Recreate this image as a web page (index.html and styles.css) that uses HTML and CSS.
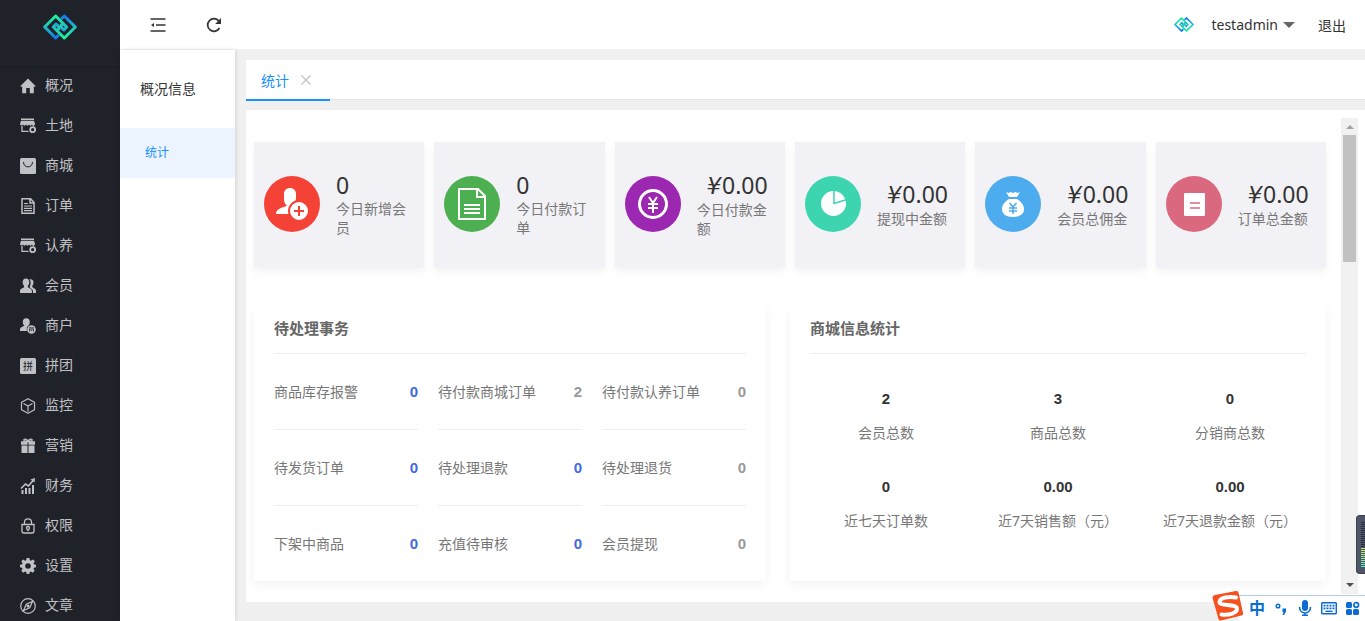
FILE: index.html
```
<!DOCTYPE html>
<html lang="zh-CN">

<head>
    <meta charset="UTF-8">
    <meta name="viewport" content="width=device-width, initial-scale=1.0">
    <title>统计</title>
    <link rel="stylesheet" href="styles.css">
</head>

<body>
    <svg class="sprite" aria-hidden="true">
        <defs>
            <linearGradient id="g3" x1="0" y1="0" x2="0" y2="1">
                <stop offset="0" stop-color="#22f098" />
                <stop offset="0.500" stop-color="#20c0c4" />
                <stop offset="1" stop-color="#1478f0" />
            </linearGradient>
            <linearGradient id="g4" x1="0" y1="0" x2="0" y2="1">
                <stop offset="0" stop-color="#1478f0" />
                <stop offset="0.500" stop-color="#20c0c4" />
                <stop offset="1" stop-color="#22f098" />
            </linearGradient>
            <symbol id="logo" viewBox="0 0 102 76">
                <g fill="none" stroke-width="9" stroke-linejoin="round">
                    <path stroke="url(#g4)" d="M54 14 64 5 97 38 64 71 31 38 39 29 47 36V48" />
                    <path stroke="url(#g3)" d="M48 62 38 71 5 38 38 5 71 38 63 47 55 40V28" />
                </g>
            </symbol>
            <symbol id="home" viewBox="0 0 16 16">
                <path fill="currentColor" d="M8 .5 0 8.600h2.200V15.200h4V10h3.600v5.200h4V8.600H16L8 .5z" />
            </symbol>
            <symbol id="shop" viewBox="0 0 16 16">
                <path fill="currentColor" d="M1 .5h13v1.400H1zM1 2.700h13l1 3.300c0 1.600-2.400 2-3 .6-.6 1.400-2.600 1.400-3 0-.6 1.400-2.500 1.400-3 0-.6 1.400-2.500 1.400-3 0C2.500 8 0 7.600 0 6z" />
                <path fill="none" stroke="currentColor" stroke-width="1.300" d="M2 8v5.400h6.500M13.500 6v2" />
                <circle cx="12.700" cy="11.700" r="2.500" fill="none" stroke="currentColor" stroke-width="1.800" />
            </symbol>
            <symbol id="bag" viewBox="0 0 16 16">
                <rect width="16" height="16" rx="1.500" fill="currentColor" />
                <path fill="none" stroke="#20222a" d="M3.500 4c0 6.500 9 6.500 9 0" />
            </symbol>
            <symbol id="order" viewBox="0 0 16 16">
                <path fill="none" stroke="currentColor" stroke-width="1.500" d="M2 .8h8.500L14 4.300v10.900H2zM10 1v4h4" />
                <path stroke="currentColor" stroke-width="1.200" d="M4 5.500h4M4 8h8M4 10.300h8M4 12.600h8" />
            </symbol>
            <symbol id="users" viewBox="0 0 16 16">
                <path fill="currentColor" d="M6 .5c2.200 0 3.300 1.600 3.300 3.600 0 1.700-.6 2.900-1.400 3.800v1.400c1 1 3.600 1.500 4 3.200V15H0v-2.500c.4-1.700 3-2.200 4-3.200V7.900C3.200 7 2.700 5.800 2.700 4.100 2.700 2.100 3.800.5 6 .5z" />
                <path fill="currentColor" d="M9.500 1.300c2.800-.6 4.200 1.200 4 3.500-.1 1.300-.6 2.200-1.200 3v1.300c1 1 3.400 1.700 3.700 3.400V15h-3c.2-3-.6-4-3.200-5.200V8.200c1.300-2.200 1.200-4.900-.3-6.900z" />
            </symbol>
            <symbol id="merchant" viewBox="0 0 16 16">
                <path fill="currentColor" d="M6.300.2c2.300 0 3.500 1.600 3.500 3.700 0 1.600-.7 3-1.600 3.900-1.400 1.400-1.800 3.200-1.200 5.200H0v-2c.3-1.700 3.200-2.200 4.400-3.400C3.500 6.800 2.800 5.500 2.800 3.900 2.800 1.800 4 .2 6.300.2z" />
                <circle cx="11.500" cy="11.500" r="4.300" fill="currentColor" />
                <path fill="none" stroke="#20222a" stroke-width=".8" d="M9 9.800h5M9.500 13.500v-2.500h4v2.500M10.800 12.500h1.400" />
            </symbol>
            <symbol id="group" viewBox="0 0 16 16">
                <rect width="16" height="16" rx="1.500" fill="currentColor" />
                <text x="3" y="11.500" font-size="10" fill="#20222a">拼</text>
            </symbol>
            <symbol id="cube" viewBox="0 0 16 16">
                <path fill="none" stroke="currentColor" stroke-width="1.200" stroke-linejoin="round" d="M8 .7 14.500 4.300v7.400L8 15.300 1.500 11.700V4.300zM3.500 5.500 8 8l4.500-2.500M8 8v5.500" />
            </symbol>
            <symbol id="gift" viewBox="0 0 16 16">
                <path fill="currentColor" d="M1 3.300h6.500v3.400H1zM8.500 3.300H15v3.400H8.500zM1.500 7.500h6V15h-6zM8.500 7.500h6V15h-6z" />
                <path fill="none" stroke="currentColor" stroke-width="1.200" d="M8 3.300C5 3.500 3 2.500 4 1.500S7.500 1.600 8 3.300c.5-1.700 3-2.800 4-1.800s-1 2-4 1.800z" />
            </symbol>
            <symbol id="chart" viewBox="0 0 16 16">
                <path fill="currentColor" d="M1.500 12h2v4h-2zM5 10h2v6H5zM8.500 10h2v6h-2zM12 7h2v9h-2zM15 0l-.5 4.500L10.500 1.500z" />
                <path fill="none" stroke="currentColor" stroke-width="1.600" d="M1 10.500 5.500 6l3 2L13.500 2" />
            </symbol>
            <symbol id="lock" viewBox="0 0 16 16">
                <path fill="none" stroke="currentColor" stroke-width="1.300" d="M2 6.500h12V13c0 1-.8 2-2 2H4c-1.200 0-2-1-2-2zM4.500 6V4c0-4.300 7-4.300 7 0v2" />
                <path fill="none" stroke="currentColor" stroke-width="1.300" d="M8 12.500c-2-2-2-4 0-4s2 2 0 4z" />
            </symbol>
            <symbol id="gear" viewBox="0 0 16 16">
                <path fill="currentColor" fill-rule="evenodd" d="M6.600 0h2.800l.5 2.200 1.100.5 2-1.300 1.800 1.900-1.200 2 .5 1.100L16 6.800v2.500l-2 .4-.5 1.200 1.200 1.900-1.900 1.900-1.900-1.200-1.200.5L9.300 16H6.700l-.5-2-1.100-.5-2 1.200-1.800-1.900 1.200-1.900L2 9.700 0 9.300V6.700l2.100-.4.500-1.100-1.300-1.900 1.900-1.900 1.900 1.300 1.100-.5zM8 5.200a2.800 2.800 0 1 0 0 5.600 2.800 2.800 0 0 0 0-5.600z" />
            </symbol>
            <symbol id="compass" viewBox="0 0 16 16">
                <circle cx="8" cy="8" r="7.300" fill="none" stroke="currentColor" stroke-width="1.200" />
                <path fill="none" stroke="currentColor" stroke-width="1.200" d="M12.500 3.500 9.700 9.700 3.500 12.500 6.300 6.300z" />
                <circle cx="8" cy="8" r="1.500" fill="currentColor" />
            </symbol>
        </defs>
    </svg>

    <div class="layout">
        <aside class="side">
            <a class="side-logo" href="#" aria-label="首页"><svg><use href="#logo" /></svg></a>
            <nav>
                <a href="#"><svg><use href="#home" /></svg>概况</a>
                <a href="#"><svg><use href="#shop" /></svg>土地</a>
                <a href="#"><svg><use href="#bag" /></svg>商城</a>
                <a href="#"><svg><use href="#order" /></svg>订单</a>
                <a href="#"><svg><use href="#shop" /></svg>认养</a>
                <a href="#"><svg><use href="#users" /></svg>会员</a>
                <a href="#"><svg><use href="#merchant" /></svg>商户</a>
                <a href="#"><svg><use href="#group" /></svg>拼团</a>
                <a href="#"><svg><use href="#cube" /></svg>监控</a>
                <a href="#"><svg><use href="#gift" /></svg>营销</a>
                <a href="#"><svg><use href="#chart" /></svg>财务</a>
                <a href="#"><svg><use href="#lock" /></svg>权限</a>
                <a href="#"><svg><use href="#gear" /></svg>设置</a>
                <a href="#"><svg><use href="#compass" /></svg>文章</a>
            </nav>
        </aside>

        <div class="right">
            <header class="header">
                <button type="button" class="icon-btn" aria-label="收起菜单">
                    <svg viewBox="0 0 16 16"><path stroke="#333" stroke-width="1.500" d="M.5 2h15M6 8h9.500M.5 14h15" /><path fill="#333" d="M1 8l3-2v4z" /></svg>
                </button>
                <button type="button" class="icon-btn" aria-label="刷新">
                    <svg viewBox="0 0 16 16"><path fill="none" stroke="#333" stroke-width="1.700" d="M13.500 11A6.300 6.300 0 1 1 13 4.200" /><path fill="#333" d="M15 1v6H9.200z" /></svg>
                </button>
                <div class="user">
                    <svg class="user-logo"><use href="#logo" /></svg>
                    <button type="button" class="user-name">testadmin<span class="caret"></span></button>
                    <a href="#">退出</a>
                </div>
            </header>

            <div class="body">
                <div class="submenu">
                    <h2>概况信息</h2>
                    <a class="active" href="#">统计</a>
                </div>

                <main class="main">
                    <div class="tabs">
                        <div class="tab">
                            <a href="#">统计</a>
                            <button type="button" aria-label="关闭"><svg viewBox="0 0 10 10"><path stroke="#c2c2c2" stroke-width="1.200" d="M.5.5l9 9M9.500.5l-9 9" /></svg></button>
                        </div>
                    </div>

                    <div class="frame">
                        <div class="content">
                            <div class="cards">
                                <div class="card">
                                    <span class="circle red"><svg viewBox="0 0 56 56">
                                        <path fill="#fff" d="M20 18c0-8 12-8 12 0v4c0 3-1.500 5-3 7v2l-4 7H12c0-5 6-6.500 11-8-2-2-3-4-3-7z" />
                                        <circle cx="35" cy="35" r="10" fill="#fff" stroke="#f44336" stroke-width="2" />
                                        <path stroke="#f44336" stroke-width="2" d="M30 35h10M35 30v10" />
                                    </svg></span>
                                    <div class="card-text">
                                        <p class="num">0</p>
                                        <p>今日新增会员</p>
                                    </div>
                                </div>
                                <div class="card">
                                    <span class="circle green"><svg viewBox="0 0 56 56">
                                        <path fill="none" stroke="#fff" stroke-width="2" stroke-linejoin="round" d="M15 13h19l7 7v23H15zM33 13v8h8" />
                                        <path stroke="#fff" stroke-width="2" d="M20 29h16M20 33h16M20 37h16" />
                                    </svg></span>
                                    <div class="card-text">
                                        <p class="num">0</p>
                                        <p>今日付款订单</p>
                                    </div>
                                </div>
                                <div class="card">
                                    <span class="circle purple"><svg viewBox="0 0 56 56">
                                        <circle cx="28" cy="28" r="13.500" fill="none" stroke="#fff" stroke-width="3" />
                                        <path fill="none" stroke="#fff" stroke-width="2" d="M24 21l4 6 4-6M28 27v10M23 28h10M23 32h10" />
                                    </svg></span>
                                    <div class="card-text">
                                        <p class="num money"><i>¥</i>0.00</p>
                                        <p>今日付款金额</p>
                                    </div>
                                </div>
                                <div class="card">
                                    <span class="circle teal"><svg viewBox="0 0 56 56">
                                        <circle cx="28.500" cy="27.500" r="12.500" fill="#fff" />
                                        <path fill="none" stroke="#3dd5b0" stroke-width="1.500" d="M29 14v13.500l13-4" />
                                    </svg></span>
                                    <div class="card-text">
                                        <p class="num money"><i>¥</i>0.00</p>
                                        <p>提现中金额</p>
                                    </div>
                                </div>
                                <div class="card">
                                    <span class="circle blue"><svg viewBox="0 0 56 56">
                                        <path fill="#fff" d="M21 16l2.500 1 2-1 2.500 1 2.500-1 2 1 2.500-1-3 5h-8zM24 23h8c4 2.500 7 6 7 10 0 5-4 8-11 8s-11-3-11-8c0-4 3-7.500 7-10z" />
                                        <path fill="none" stroke="#4dacee" stroke-width="1.500" d="M24.500 27l3.500 4 3.500-4M28 31v7M24 32h8M24 35h8" />
                                    </svg></span>
                                    <div class="card-text">
                                        <p class="num money"><i>¥</i>0.00</p>
                                        <p>会员总佣金</p>
                                    </div>
                                </div>
                                <div class="card">
                                    <span class="circle pink"><svg viewBox="0 0 56 56">
                                        <rect x="18" y="17" width="21" height="23" rx="1" fill="#fff" />
                                        <path stroke="#da697f" stroke-width="1.500" d="M24 27h10M24 32h10" />
                                    </svg></span>
                                    <div class="card-text">
                                        <p class="num money"><i>¥</i>0.00</p>
                                        <p>订单总金额</p>
                                    </div>
                                </div>
                            </div>

                            <div class="panels">
                                <section class="panel todo">
                                    <h3>待处理事务</h3>
                                    <ul>
                                        <li>商品库存报警<b class="hot">0</b></li>
                                        <li>待付款商城订单<b>2</b></li>
                                        <li>待付款认养订单<b>0</b></li>
                                        <li>待发货订单<b class="hot">0</b></li>
                                        <li>待处理退款<b class="hot">0</b></li>
                                        <li>待处理退货<b>0</b></li>
                                        <li>下架中商品<b class="hot">0</b></li>
                                        <li>充值待审核<b class="hot">0</b></li>
                                        <li>会员提现<b>0</b></li>
                                    </ul>
                                </section>
                                <section class="panel stats">
                                    <h3>商城信息统计</h3>
                                    <ul>
                                        <li><b>2</b>会员总数</li>
                                        <li><b>3</b>商品总数</li>
                                        <li><b>0</b>分销商总数</li>
                                        <li><b>0</b>近七天订单数</li>
                                        <li><b>0.00</b>近7天销售额（元）</li>
                                        <li><b>0.00</b>近7天退款金额（元）</li>
                                    </ul>
                                </section>
                            </div>
                        </div>

                        <div class="scrollbar">
                            <span class="arrow up"></span>
                            <span class="thumb"></span>
                            <span class="arrow down"></span>
                        </div>
                    </div>
                </main>
            </div>
        </div>
    </div>

    <div class="meter"><span class="meter-off"></span><span class="meter-on"></span></div>

    <div class="ime">
        <svg class="ime-logo" viewBox="0 0 32 30">
            <path fill="#f4511e" d="M3 4 24 0q2-.3 2.500 1.500L31 22q.5 2-1.500 2.600L9 29.500q-2 .5-2.500-1.500L.5 7Q0 4.700 3 4z" />
            <path fill="none" stroke="#fff" stroke-width="4" stroke-linecap="round" d="M24 6.500C17 5 8 6.500 7.500 11c-.4 4.500 17 1.500 17.500 6.500.4 4.500-8 7-15.500 6" />
        </svg>
        <span class="ime-bar">
            <span>中</span>
            <svg viewBox="0 0 16 16"><circle cx="5" cy="6" r="1.800" fill="none" stroke="#0b6cd4" stroke-width="1.500" /><path fill="#0b6cd4" d="M9.500 8.500h3.500v3L11 15H9.500l1-3h-1z" /></svg>
            <svg viewBox="0 0 16 16"><rect x="5" width="6" height="11" rx="3" fill="#0b6cd4" /><path fill="none" stroke="#0b6cd4" stroke-width="1.600" d="M2.500 7c0 8 11 8 11 0M8 13v3M5 15.300h6" /></svg>
            <svg viewBox="0 0 16 16"><rect x=".7" y="2.700" width="14.600" height="11" rx="1" fill="none" stroke="#0b6cd4" stroke-width="1.500" /><path stroke="#0b6cd4" stroke-width="1.700" stroke-dasharray="2 1" d="M2.500 5.700h11M2.500 8.300h11" /><path stroke="#0b6cd4" stroke-width="1.400" d="M4.500 11.300h7" /></svg>
            <svg viewBox="0 0 16 16"><rect x="1" y="2" width="6" height="6" rx="1.500" fill="#0b6cd4" /><rect x="1" y="9" width="6" height="6" rx="1.500" fill="#0b6cd4" /><rect x="8" y="9" width="6" height="6" rx="1.500" fill="#0b6cd4" /><circle cx="11.200" cy="5" r="2.300" fill="none" stroke="#0b6cd4" stroke-width="1.700" /></svg>
        </span>
    </div>
</body>

</html>
```
FILE: styles.css
```
* {
    box-sizing: border-box;
}

body {
    margin: 0;
    font-family: "Noto Sans", "Noto Sans CJK SC", sans-serif;
    font-size: 14px;
    color: #333;
    background: #f0f0f0;
}

h2,
h3,
p,
ul {
    margin: 0;
    padding: 0;
    list-style: none;
}

a {
    color: inherit;
    text-decoration: none;
}

button {
    padding: 0;
    border: none;
    background: none;
    font: inherit;
    color: inherit;
    cursor: pointer;
}

svg {
    display: block;
}

.sprite {
    position: absolute;
    width: 0;
    height: 0;
}

.layout {
    display: flex;
    height: 100vh;
    overflow: hidden;
}

/* dark menu */
.side {
    flex: none;
    width: 120px;
    background: #20222a;
    color: #c0c1c4;
}

.side-logo {
    display: flex;
    justify-content: center;
    height: 66px;
    padding-top: 14px;
    box-shadow: 0 1px 2px rgba(0, 0, 0, 0.2);
}

.side-logo svg {
    width: 34px;
    height: 26px;
}

.side nav a {
    display: flex;
    gap: 9px;
    height: 40px;
    padding-left: 20px;
    line-height: 38px;
}

.side nav svg {
    width: 16px;
    height: 16px;
    margin-top: 12px;
}

.right {
    flex: 1;
    min-width: 0;
    display: flex;
    flex-direction: column;
}

/* top bar */
.header {
    flex: none;
    display: flex;
    align-items: center;
    gap: 40px;
    height: 50px;
    padding: 0 19px 0 30px;
    background: #fff;
    border-bottom: 1px solid #f3f3f3;
}

.icon-btn svg {
    width: 16px;
    height: 16px;
}

.user {
    display: flex;
    align-items: center;
    margin-left: auto;
}

.user-logo {
    width: 20px;
    height: 15px;
    margin-right: 17px;
}

.user-name {
    display: flex;
    align-items: center;
    gap: 5px;
    margin-right: 23px;
}

.caret {
    border: 6px solid transparent;
    border-top-color: #666;
    border-bottom: none;
}

.body {
    flex: 1;
    display: flex;
    min-height: 0;
}

.submenu {
    flex: none;
    width: 115px;
    background: #fff;
    box-shadow: 1px 0 4px rgba(0, 0, 0, 0.12);
}

.submenu h2 {
    padding-left: 20px;
    font-size: 14px;
    font-weight: 400;
    line-height: 78px;
}

.submenu a {
    display: block;
    padding-left: 25px;
    font-size: 12px;
    line-height: 50px;
}

.submenu a.active {
    color: #1890ff;
    background: #ecf5ff;
}

.main {
    flex: 1;
    min-width: 0;
    display: flex;
    flex-direction: column;
    gap: 10px;
    padding: 10px 0 19px 11px;
}

.tabs {
    flex: none;
    display: flex;
    height: 40px;
    background: #fff;
    border-bottom: 1px solid #e4e4e4;
}

.tab {
    display: flex;
    align-items: center;
    gap: 12px;
    height: 41px;
    padding: 0 19px 0 15px;
    color: #1890ff;
    border-bottom: 2px solid #1890ff;
}

.tab svg {
    width: 10px;
    height: 10px;
}

.frame {
    flex: 1;
    display: flex;
    min-height: 0;
    padding: 8px 7px 8px 8px;
    background: #fff;
}

.content {
    flex: 1;
    min-width: 0;
    padding: 24px 15px 0 0;
}

.cards {
    display: grid;
    grid-template-columns: repeat(6, 1fr);
    gap: 10px;
    margin-bottom: 37px;
}

.card {
    display: flex;
    align-items: center;
    gap: 16px;
    height: 126px;
    padding: 0 10px 2px;
    background: #f2f1f6;
    box-shadow: 0 4px 8px rgba(0, 0, 0, 0.05);
}

.circle {
    flex: none;
    width: 56px;
    height: 56px;
    border-radius: 50%;
}

.red { background: #f44336; }
.green { background: #4caf50; }
.purple { background: #9c27b0; }
.teal { background: #3dd5b0; }
.blue { background: #4dacee; }
.pink { background: #da697f; }

.card-text {
    width: 72px;
    color: #777;
    line-height: 19px;
}

.card-text .num {
    font-size: 23px;
    line-height: 28px;
    color: #333;
}

.card-text .money {
    padding-right: 1px;
    text-align: right;
}

.money i {
    font-family: "DejaVu Sans", sans-serif;
    margin-right: 1px;
}

.panels {
    display: grid;
    grid-template-columns: 1fr 1fr;
}

.panel {
    height: 276px;
    padding: 0 20px;
    color: #777;
    box-shadow: 0 4px 10px rgba(0, 0, 0, 0.05);
}

.panel h3 {
    height: 49px;
    font-size: 15px;
    line-height: 46px;
    color: #666;
    border-bottom: 1px solid #eee;
}

.panel b {
    font-family: "Liberation Sans", Arial, sans-serif;
    font-size: 15px;
    color: #999;
}

.todo {
    margin-right: 24px;
}

.todo ul {
    display: grid;
    grid-template-columns: repeat(3, 1fr);
    column-gap: 20px;
}

.todo li {
    display: flex;
    align-items: center;
    justify-content: space-between;
    height: 76px;
    padding-bottom: 1px;
    border-bottom: 1px solid #eee;
}

.todo li:nth-child(n+7) {
    border-bottom-color: transparent;
}

.todo .hot {
    color: #4169e1;
}

.stats ul {
    display: grid;
    grid-template-columns: repeat(3, 1fr);
    margin: 28px -10px 0;
}

.stats li {
    height: 88px;
    text-align: center;
    line-height: 34px;
}

.stats b {
    display: block;
    color: #333;
}

/* scroll track */
.scrollbar {
    flex: none;
    display: flex;
    flex-direction: column;
    width: 17px;
    padding: 7px 2px;
    background: #f1f1f1;
}

.thumb {
    height: 127px;
    margin-top: 6px;
    background: #c1c1c1;
}

.arrow {
    align-self: center;
    border: 4px solid transparent;
}

.arrow.up {
    border-top: none;
    border-bottom-color: #a3a3a3;
}

.arrow.down {
    margin-top: auto;
    border-bottom: none;
    border-top-color: #505050;
}

/* desktop widgets lying over the page */
.meter {
    position: fixed;
    right: 0;
    bottom: 47px;
    width: 9px;
    height: 59px;
    padding: 6px 0 0 4px;
    background: #50566a;
    border: 1px solid #3b404e;
    border-right: none;
    border-radius: 4px 0 0 4px;
}

.meter span {
    display: block;
}

.meter-off {
    height: 26px;
    background: repeating-linear-gradient(#2c303b 0 1px, transparent 1px 2px);
}

.meter-on {
    height: 20px;
    background: repeating-linear-gradient(transparent 0 1px, #50566a 1px 2px), linear-gradient(#c6ee5c, #4fe6c8);
}

.ime {
    position: fixed;
    right: 0;
    bottom: 0;
    display: flex;
    align-items: flex-end;
}

.ime-logo {
    position: relative;
    width: 32px;
    height: 30px;
    margin-right: -6px;
}

.ime-bar {
    display: flex;
    align-items: center;
    gap: 8px;
    height: 26px;
    padding: 0 4px 2px 11px;
    font-size: 16px;
    font-weight: 700;
    line-height: 24px;
    color: #0b6cd4;
    background: #fff;
    border-top: 1px solid #b5d0ea;
}

.ime-bar svg {
    width: 16px;
    height: 16px;
}
```
